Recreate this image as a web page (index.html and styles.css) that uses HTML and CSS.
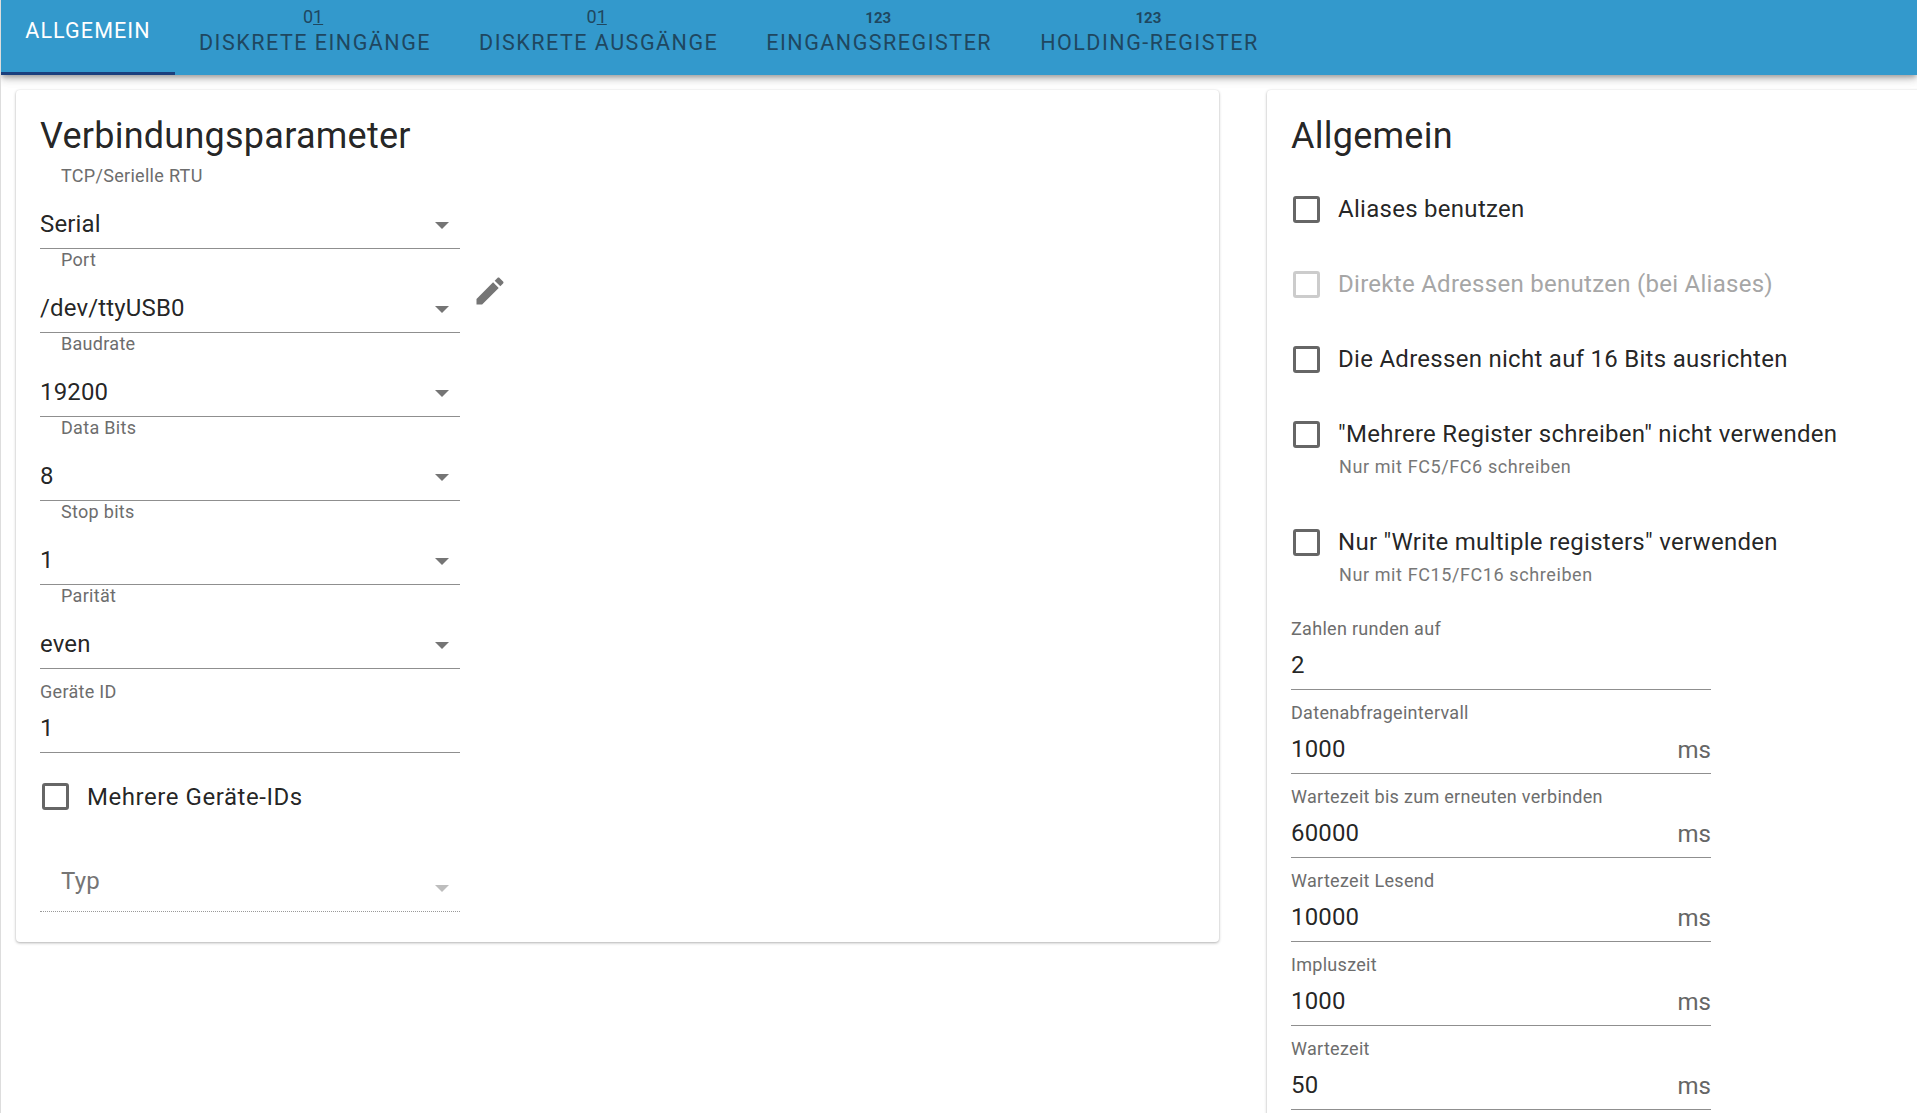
FILE: index.html
```html
<!DOCTYPE html>
<html lang="de">
<head>
<meta charset="utf-8">
<title>Modbus</title>
<link rel="stylesheet" href="styles.css">
</head>
<body>
<header class="tabs">
  <div class="tab active"><span class="tab-label">ALLGEMEIN</span></div>
  <div class="tab"><span class="tab-icon">0<u>1</u></span><span class="tab-label">DISKRETE EINGÄNGE</span></div>
  <div class="tab"><span class="tab-icon">0<u>1</u></span><span class="tab-label">DISKRETE AUSGÄNGE</span></div>
  <div class="tab"><span class="tab-icon bold">123</span><span class="tab-label">EINGANGSREGISTER</span></div>
  <div class="tab"><span class="tab-icon bold">123</span><span class="tab-label">HOLDING-REGISTER</span></div>
</header>
<main class="content">
  <section class="card left">
    <h2>Verbindungsparameter</h2>
    <div class="field-row">
      <div class="column">
        <div class="select"><span class="label">TCP/Serielle RTU</span><div class="value-row"><span class="value">Serial</span><i class="arrow"></i></div></div>
        <div class="select"><span class="label">Port</span><div class="value-row"><span class="value">/dev/ttyUSB0</span><i class="arrow"></i></div></div>
        <div class="select"><span class="label">Baudrate</span><div class="value-row"><span class="value">19200</span><i class="arrow"></i></div></div>
        <div class="select"><span class="label">Data Bits</span><div class="value-row"><span class="value">8</span><i class="arrow"></i></div></div>
        <div class="select"><span class="label">Stop bits</span><div class="value-row"><span class="value">1</span><i class="arrow"></i></div></div>
        <div class="select"><span class="label">Parität</span><div class="value-row"><span class="value">even</span><i class="arrow"></i></div></div>
        <div class="text-field"><span class="label">Geräte ID</span><div class="value-row"><span class="value">1</span></div></div>
        <label class="check single"><i class="box"></i><span class="check-text">Mehrere Geräte-IDs</span></label>
        <div class="select disabled"><div class="value-row"><span class="value">Typ</span><i class="arrow"></i></div></div>
      </div>
      <svg class="pencil" viewBox="0 0 24 24" width="36" height="36"><path d="M3 17.25V21h3.75L17.81 9.94l-3.75-3.75L3 17.25zM20.71 7.04c.39-.39.39-1.02 0-1.41l-2.34-2.34c-.39-.39-1.02-.39-1.41 0l-1.83 1.83 3.75 3.75 1.83-1.83z"/></svg>
    </div>
  </section>
  <section class="card right">
    <h2>Allgemein</h2>
    <div class="checks">
      <label class="check"><i class="box"></i><span class="check-text">Aliases benutzen</span></label>
      <label class="check off"><i class="box"></i><span class="check-text">Direkte Adressen benutzen (bei Aliases)</span></label>
      <label class="check"><i class="box"></i><span class="check-text">Die Adressen nicht auf 16 Bits ausrichten</span></label>
      <label class="check tall"><i class="box"></i><span class="check-text">"Mehrere Register schreiben" nicht verwenden<small>Nur mit FC5/FC6 schreiben</small></span></label>
      <label class="check tall"><i class="box"></i><span class="check-text">Nur "Write multiple registers" verwenden<small>Nur mit FC15/FC16 schreiben</small></span></label>
    </div>
    <div class="inputs">
      <div class="text-field"><span class="label">Zahlen runden auf</span><div class="value-row"><span class="value">2</span></div></div>
      <div class="text-field"><span class="label">Datenabfrageintervall</span><div class="value-row"><span class="value">1000</span><span class="unit">ms</span></div></div>
      <div class="text-field"><span class="label">Wartezeit bis zum erneuten verbinden</span><div class="value-row"><span class="value">60000</span><span class="unit">ms</span></div></div>
      <div class="text-field"><span class="label">Wartezeit Lesend</span><div class="value-row"><span class="value">10000</span><span class="unit">ms</span></div></div>
      <div class="text-field"><span class="label">Impluszeit</span><div class="value-row"><span class="value">1000</span><span class="unit">ms</span></div></div>
      <div class="text-field"><span class="label">Wartezeit</span><div class="value-row"><span class="value">50</span><span class="unit">ms</span></div></div>
    </div>
  </section>
</main>
</body>
</html>
```
FILE: styles.css
```css
* { box-sizing: border-box; }
html, body { margin: 0; height: 100%; overflow: hidden; background: #fff; }
body {
  font-family: Roboto, "Liberation Sans", sans-serif;
  color: rgba(0,0,0,.87);
  border-left: 1px solid #ddd;
}
.tabs {
  display: flex;
  height: 75px;
  background: #3399cc;
  box-shadow: 0 3px 5px -1px rgba(0,0,0,.28), 0 5px 8px rgba(0,0,0,.12), 0 1px 14px rgba(0,0,0,.08);
  position: relative;
  z-index: 2;
}
.tab {
  display: flex;
  flex-direction: column;
  align-items: center;
  padding: 8px 24px 0;
  font-size: 21.5px;
  letter-spacing: 1.5px;
  color: #1f4760;
  height: 75px;
}
.tab.active {
  color: #fff;
  border-bottom: 3px solid #1a3f7d;
  width: 174px;
  padding: 19px 0 0;
  letter-spacing: 1.1px;
}
.tab-icon { font-size: 18px; line-height: 18px; height: 18px; letter-spacing: 0; text-underline-offset: 1px; margin-right: 4px; }
.tab-icon.bold { font-size: 15px; font-weight: 700; margin-top: 1px; margin-bottom: -1px; margin-right: 2px; }
.tab-label { line-height: 24px; white-space: nowrap; }
.tab-icon + .tab-label { margin-top: 5px; }
.content {
  display: flex;
  align-items: flex-start;
  padding: 15px 0 0 15px;
  gap: 48px;
}
.card {
  flex: none;
  background: #fff;
  border-radius: 4px;
  box-shadow: 0 1px 3px rgba(0,0,0,.3), 0 0 2px rgba(0,0,0,.06);
  padding: 0 24px;
}
.left { width: 1203px; height: 852px; }
.right { width: 700px; height: 1100px; }
h2 {
  margin: 0;
  font-size: 36px;
  font-weight: 400;
  line-height: 42px;
  letter-spacing: .25px;
  padding-top: 25px;
  height: 75px;
}
.field-row { display: flex; align-items: flex-start; }
.column { width: 420px; flex: none; }
.select, .text-field {
  display: flex;
  flex-direction: column;
  justify-content: space-between;
  height: 84px;
  border-bottom: 1px solid #8f8f8f;
}
.label {
  display: block;
  font-size: 18px;
  line-height: 22px;
  letter-spacing: .3px;
  color: #6d6d6d;
  padding-left: 21px;
}
.text-field .label { padding-left: 0; padding-top: 12px; line-height: 22px; height: 34px; }
.value-row { display: flex; align-items: center; justify-content: space-between; height: 49px; }
.value { font-size: 24px; line-height: 30px; letter-spacing: .15px; white-space: nowrap; }
.arrow {
  width: 0;
  height: 0;
  border-left: 7.5px solid transparent;
  border-right: 7.5px solid transparent;
  border-top: 7.5px solid #757575;
  margin: 3px 11px 0 0;
}
.right .text-field { width: 420px; }
.unit { font-size: 24px; color: #666; margin-top: 3px; }
.check { display: flex; align-items: flex-start; }
.box { flex: none; width: 27px; height: 27px; border: 3px solid #666; border-radius: 3px; margin: 0 18px 0 2px; }
.check-text { font-size: 24px; line-height: 30px; letter-spacing: .28px; margin-top: -2px; }
.check small { display: block; font-size: 18px; line-height: 24px; color: #777; letter-spacing: .6px; margin-top: 6px; margin-left: 1px; }
.check.off .box { border-color: #ccc; }
.check.off .check-text { color: #a6a6a6; }
.single { height: 75px; padding-top: 30px; }
.single .check-text { letter-spacing: .55px; margin-top: -1px; }
.disabled { border-bottom: 1px dotted #999; justify-content: flex-end; }
.disabled .value { color: #757575; padding-left: 21px; padding-bottom: 11px; line-height: 30px; }
.disabled .arrow { border-top-color: #bdbdbd; }
.checks { padding-top: 31px; }
.checks .check { height: 75px; }
.checks .check.tall { height: 108px; }
.checks .check.tall:last-child { height: 77px; }
.pencil { fill: #757575; margin: 108px 0 0 12px; flex: none; }
```
